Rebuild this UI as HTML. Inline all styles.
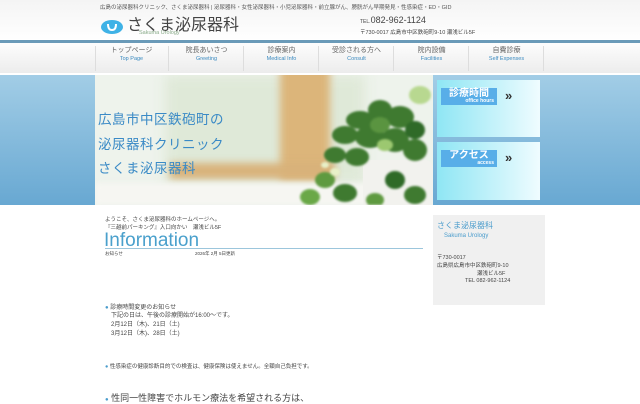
<!DOCTYPE html>
<html><head><meta charset="utf-8"><style>
*{margin:0;padding:0;box-sizing:border-box}
body{width:640px;height:400px;overflow:hidden;background:#fff;font-family:"Liberation Sans","Noto Sans CJK JP",sans-serif;position:relative;color:#333}
.abs{position:absolute}
#top{left:0;top:0;width:640px;height:41px;background:linear-gradient(#f4f4f4,#fff)}
#line{left:0;top:40px;width:640px;height:3px;background:#6a9ab8}
#nav{left:0;top:43px;width:640px;height:30px;background:linear-gradient(#fdfdfd,#ececec)}
.ni{position:absolute;top:46px;width:74px;height:25px;text-align:center;border-right:1px solid #ddd}
.ni b{display:block;font-weight:normal;font-size:7px;color:#666;line-height:9px}
.ni i{display:block;font-style:normal;font-size:5.5px;color:#3a8ac0;line-height:8px}
#hero{left:0;top:75px;width:640px;height:130px;background:linear-gradient(#a2cde6,#68a8d2)}
#img{left:95px;top:75px;width:338px;height:130px;background:#eef3ec;overflow:hidden}
.txt{font-size:13.5px;color:#3a8ac6;left:98px;letter-spacing:.5px}
.box{left:437px;width:103px;background:linear-gradient(90deg,#8fe6f4,#effcff)}
.lab{left:441px;width:56px;height:17px;background:#58aee8;color:#fff;font-size:10px;font-weight:bold;text-align:center;line-height:11px}
.lab span{display:block;font-size:5px;line-height:5px;text-align:right;padding-right:3px}
.arr{left:505px;font-size:13px;color:#333;font-weight:bold}
.s{font-size:5.5px;color:#444;white-space:nowrap}
</style></head><body>
<div class="abs" id="top"></div>
<div class="abs s" style="left:100px;top:3px;color:#555">広島の泌尿器科クリニック、さくま泌尿器科 | 泌尿器科・女性泌尿器科・小児泌尿器科・前立腺がん、膀胱がん早期発見・性感染症・ED・GID</div>
<svg class="abs" style="left:100px;top:17px" width="24" height="18" viewBox="0 0 24 18"><ellipse cx="12" cy="10" rx="11" ry="7" fill="#3fb2e6"/><path d="M8 7 q0 6 4 6 q4 0 4-6" stroke="#fff" stroke-width="2" fill="none"/></svg>
<div class="abs" style="left:127px;top:11px;font-size:16px;color:#444">さくま泌尿器科</div>
<div class="abs" style="left:139px;top:30px;font-size:5.5px;color:#8a8">Sakuma Urology</div>
<div class="abs" style="left:360px;top:15px;font-size:9px;color:#444"><span style="font-size:5px">TEL.</span>082-962-1124</div>
<div class="abs s" style="left:360px;top:28px">〒730-0017 広島市中区鉄砲町9-10 瀬浅ビル5F</div>
<div class="abs" id="line"></div>
<div class="abs" id="nav"></div>
<div class="abs" style="left:95px;top:46px;height:25px;border-left:1px solid #ddd"></div>
<div class="ni" style="left:95px"><b>トップページ</b><i>Top Page</i></div>
<div class="ni" style="left:170px"><b>院長あいさつ</b><i>Greeting</i></div>
<div class="ni" style="left:245px"><b>診療案内</b><i>Medical Info</i></div>
<div class="ni" style="left:320px"><b>受診される方へ</b><i>Consult</i></div>
<div class="ni" style="left:395px"><b>院内設備</b><i>Facilities</i></div>
<div class="ni" style="left:470px"><b>自費診療</b><i>Self Expenses</i></div>
<div class="abs" id="hero"></div>
<div class="abs" id="img">
 <div class="abs" style="left:70px;top:0;width:200px;height:110px;background:#dfe9d8;filter:blur(6px)"></div>
 <div class="abs" style="left:185px;top:-10px;width:50px;height:115px;background:#dcb57a;filter:blur(4px)"></div>
 <div class="abs" style="left:75px;top:88px;width:165px;height:16px;background:#d8b27a;filter:blur(4px)"></div>
 <div class="abs" style="left:0;top:108px;width:338px;height:22px;background:#f6f6f2;filter:blur(3px)"></div>
 <div class="abs" style="left:268px;top:85px;width:70px;height:50px;background:#f2f2ee;border-radius:8px"></div>
 <svg class="abs" style="left:0;top:0;filter:blur(1px)" width="338" height="130"><g fill="#3f7a30">
 <ellipse cx="265" cy="45" rx="14" ry="9"/><ellipse cx="285" cy="35" rx="12" ry="10"/><ellipse cx="305" cy="42" rx="14" ry="11"/>
 <ellipse cx="250" cy="60" rx="13" ry="9"/><ellipse cx="275" cy="62" rx="15" ry="11"/><ellipse cx="300" cy="65" rx="14" ry="12"/>
 <ellipse cx="320" cy="75" rx="12" ry="11"/><ellipse cx="240" cy="80" rx="11" ry="8"/><ellipse cx="262" cy="82" rx="12" ry="9"/>
 <ellipse cx="320" cy="55" rx="10" ry="9" fill="#2f6a28"/><ellipse cx="285" cy="50" rx="10" ry="8" fill="#5a9440"/>
 <ellipse cx="230" cy="105" rx="10" ry="8" fill="#5f9a40"/><ellipse cx="250" cy="118" rx="12" ry="9"/><ellipse cx="215" cy="122" rx="10" ry="8" fill="#6aa848"/>
 <ellipse cx="300" cy="105" rx="10" ry="9" fill="#2f6a28"/><ellipse cx="320" cy="120" rx="11" ry="9"/><ellipse cx="280" cy="125" rx="9" ry="7" fill="#5f9a40"/>
 <ellipse cx="325" cy="20" rx="11" ry="9" fill="#b8d890"/><ellipse cx="290" cy="70" rx="8" ry="6" fill="#9cc870"/>
 </g><g fill="#e8f0c8"><ellipse cx="240" cy="97" rx="5" ry="4"/><ellipse cx="230" cy="90" rx="4" ry="3"/></g></svg>
</div>
<div class="abs txt" style="top:108px">広島市中区鉄砲町の</div>
<div class="abs txt" style="top:133px">泌尿器科クリニック</div>
<div class="abs txt" style="top:157px">さくま泌尿器科</div>
<div class="abs box" style="top:80px;height:57px"></div>
<div class="abs box" style="top:142px;height:58px"></div>
<div class="abs lab" style="top:88px">診療時間<span>office hours</span></div>
<div class="abs arr" style="top:88px">»</div>
<div class="abs lab" style="top:150px">アクセス<span>access</span></div>
<div class="abs arr" style="top:150px">»</div>
<div class="abs s" style="left:105px;top:215px">ようこそ、さくま泌尿器科のホームページへ。</div>
<div class="abs s" style="left:105px;top:223px">『三越前パーキング』入口向かい　瀬浅ビル5F</div>
<div class="abs" style="left:104px;top:231px;font-size:19px;color:#4aa0cc;line-height:20px">Information</div>
<div class="abs" style="left:105px;top:248px;width:318px;height:1px;background:#9cc6dc"></div>
<div class="abs s" style="left:105px;top:251px;font-size:4.5px">お知らせ</div>
<div class="abs s" style="left:195px;top:251px;font-size:4.5px">2026年 2月 5日更新</div>
<div class="abs" style="left:433px;top:215px;width:112px;height:90px;background:#f0f0f0"></div>
<div class="abs" style="left:437px;top:220px;font-size:8px;color:#4a9ccc">さくま泌尿器科</div>
<div class="abs" style="left:444px;top:233px;font-size:6px;color:#4a9ccc">Sakuma Urology</div>
<div class="abs s" style="left:437px;top:253px">〒730-0017</div>
<div class="abs s" style="left:437px;top:261px">広島県広島市中区鉄砲町9-10</div>
<div class="abs s" style="left:477px;top:269px">瀬浅ビル5F</div>
<div class="abs s" style="left:465px;top:278px">TEL 082-962-1124</div>
<div class="abs s" style="left:105px;top:302px;font-size:6px"><span style="color:#4a9ccc">●</span> 診療時間変更のお知らせ</div>
<div class="abs s" style="left:111px;top:310px;font-size:6px">下記の日は、午後の診療開始が16:00～です。</div>
<div class="abs s" style="left:111px;top:319px;font-size:6px">2月12日（木)、21日（土)</div>
<div class="abs s" style="left:111px;top:328px;font-size:6px">3月12日（木)、28日（土)</div>
<div class="abs s" style="left:105px;top:362px;font-size:5.5px"><span style="color:#4a9ccc">●</span> 性感染症の健康診断目的での検査は、健康保険は使えません。全額自己負担です。</div>
<div class="abs s" style="left:105px;top:391px;font-size:9px"><span style="color:#4a9ccc;font-size:6px">●</span> 性同一性障害でホルモン療法を希望される方は、</div>
</body></html>
